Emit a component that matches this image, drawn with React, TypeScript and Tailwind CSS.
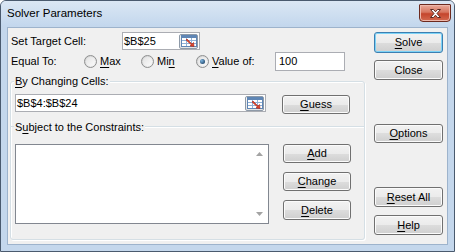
import React from "react";

const font = "font-['Liberation_Sans',Arial,sans-serif]";

function Btn({ children, className = "", focused = false }: { children: React.ReactNode; className?: string; focused?: boolean }) {
  return (
    <div
      className={`flex items-center justify-center rounded-[3px] border text-[11px] text-black ${
        focused
          ? "border-[#3c7fb1] bg-[linear-gradient(#f2f2f2,#ebebeb_50%,#dddddd_50%,#cfcfcf)] shadow-[inset_0_0_0_1px_#7cd3f7]"
          : "border-[#707070] bg-[linear-gradient(#f2f2f2,#ebebeb_50%,#dddddd_50%,#cfcfcf)] shadow-[inset_0_0_0_1px_#fbfbfb]"
      } ${className}`}
    >
      {children}
    </div>
  );
}

function K({ children }: { children: React.ReactNode }) {
  return <span className="underline decoration-1 underline-offset-[2px]">{children}</span>;
}

function RefIcon() {
  return (
    <svg width="16" height="12" viewBox="0 0 16 12">
      <rect x="0.5" y="0.5" width="15" height="11" fill="#ffffff" stroke="#5f86b5" />
      <rect x="1" y="1" width="14" height="2" fill="#5f86b5" />
      <line x1="1" y1="5.5" x2="15" y2="5.5" stroke="#8fb0d6" />
      <line x1="1" y1="8.5" x2="15" y2="8.5" stroke="#8fb0d6" />
      <line x1="5.5" y1="3" x2="5.5" y2="11" stroke="#8fb0d6" />
      <line x1="10.5" y1="3" x2="10.5" y2="11" stroke="#8fb0d6" />
      <path d="M6 4 L11 9 L12.5 7.5 L13 11.5 L9 11 L10.3 9.8 L5 5 Z" fill="#e0452b" stroke="#a8251a" strokeWidth="0.6" />
    </svg>
  );
}

function RefBtn() {
  return (
    <div className="flex h-[15px] w-[19px] items-center justify-center rounded-[2px] border border-[#8e9aa8] bg-[linear-gradient(#f6f6f6,#e4e4e4)]">
      <RefIcon />
    </div>
  );
}

function Radio({ checked = false }: { checked?: boolean }) {
  return (
    <div className="flex h-[13px] w-[13px] items-center justify-center rounded-full border border-[#8e8f8f] bg-[linear-gradient(135deg,#cfd0d1,#f6f6f6)]">
      <div className="flex h-[9px] w-[9px] items-center justify-center rounded-full bg-[linear-gradient(135deg,#e3e3e3,#fbfbfb)]">
        {checked && <div className="h-[5px] w-[5px] rounded-full bg-[radial-gradient(circle_at_35%_35%,#7db5e0,#0b2d4f)]" />}
      </div>
    </div>
  );
}

export default function App() {
  return (
    <div className={`${font} h-[252px] w-[455px] select-none text-[11px] text-black`}>
      <div className="flex h-[252px] w-[455px] flex-col rounded-t-[6px] border border-[#4a5a6e] bg-[#c4d7ec]">
        {/* Title bar */}
        <div className="flex h-[25px] items-start justify-between rounded-t-[5px] bg-[linear-gradient(#dbe7f4,#c3d7ed)] pl-[6px] pr-[3px]">
          <span className="mt-[5px] text-[11.5px] leading-[14px] text-black">Solver Parameters</span>
          <div className="mt-[3px] flex h-[18px] w-[32px] items-center justify-center rounded-b-[4px] rounded-t-[1px] border border-[#6d2a1f] bg-[linear-gradient(#e9a99a,#d7765f_45%,#c4452c_55%,#d46a50)] shadow-[inset_0_0_0_1px_#eeb8ab]">
            <svg width="13" height="11" viewBox="0 0 13 11">
              <path d="M1.5 1.5 L4.5 1.5 L6.5 3.8 L8.5 1.5 L11.5 1.5 L8 5.5 L11.5 9.5 L8.5 9.5 L6.5 7.2 L4.5 9.5 L1.5 9.5 L5 5.5 Z" fill="#ffffff" stroke="#5a2a22" strokeWidth="1" strokeLinejoin="round" />
            </svg>
          </div>
        </div>

        {/* Frame + client */}
        <div className="flex flex-1 flex-col px-[6px] pb-[5px] pt-[1px]">
          <div className="flex h-[218px] border border-[#9db3cc] bg-[#f0f0f0]">
            {/* Left column */}
            <div className="flex w-[357px] flex-col">
              {/* Row 1 */}
              <div className="mt-[4px] flex h-[18px] items-center">
                <span className="w-[114px] pl-[3px]">Set Target Cell:</span>
                <div className="flex h-[18px] w-[78px] items-center justify-between border border-[#abadb3] bg-white pl-[1px] pr-[1px]">
                  <span>$B$25</span>
                  <RefBtn />
                </div>
              </div>
              {/* Row 2 */}
              <div className="mt-[2px] flex h-[19px] items-center">
                <span className="w-[76px] pl-[3px]">Equal To:</span>
                <div className="flex w-[57px] items-center">
                  <Radio />
                  <span className="ml-[3px]">
                    <K>M</K>ax
                  </span>
                </div>
                <div className="flex w-[55px] items-center">
                  <Radio />
                  <span className="ml-[3px]">
                    Mi<K>n</K>
                  </span>
                </div>
                <div className="flex w-[79px] items-center">
                  <Radio checked />
                  <span className="ml-[3px]">
                    <K>V</K>alue of:
                  </span>
                </div>
                <div className="flex h-[19px] w-[70px] items-center border border-[#abadb3] bg-white pl-[3px]">100</div>
              </div>

              {/* Group */}
              <div className="relative ml-[2px] mt-[10px] h-[159px] w-[355px] rounded-[3px] border border-[#d5dfe5] shadow-[inset_1px_1px_0_#ffffff,1px_1px_0_#ffffff]">
                <span className="absolute -top-[8px] left-[3px] bg-[#f0f0f0] px-[1px] leading-[14px]">
                  <K>B</K>y Changing Cells:
                </span>
                <div className="mt-[12px] flex items-start pl-[4px]">
                  <div className="flex h-[18px] w-[251px] items-center justify-between border border-[#abadb3] bg-white pl-[1px] pr-[1px]">
                    <span>$B$4:$B$24</span>
                    <RefBtn />
                  </div>
                  <Btn className="ml-[16px] mt-[1px] h-[19px] w-[68px]">
                    <span>
                      <K>G</K>uess
                    </span>
                  </Btn>
                </div>
                <div className="mt-[6px] flex h-[14px] items-center">
                  <div className="h-[2px] w-[3px] border-t border-[#d5dfe5] border-b-white" />
                  <span className="px-[1px] leading-[14px]">
                    S<K>u</K>bject to the Constraints:
                  </span>
                  <div className="h-[2px] flex-1 border-b border-t border-b-white border-t-[#d5dfe5]" />
                </div>
                <div className="mt-[10px] flex items-start pl-[4px]">
                  <div className="flex h-[80px] w-[254px] border border-[#828790] bg-white">
                    <div className="flex-1" />
                    <div className="flex w-[17px] flex-col items-center justify-between py-[7px]">
                      <svg width="7" height="4" viewBox="0 0 7 4">
                        <path d="M0 4 L3.5 0 L7 4 Z" fill="#a3a3a3" />
                      </svg>
                      <svg width="7" height="4" viewBox="0 0 7 4">
                        <path d="M0 0 L3.5 4 L7 0 Z" fill="#a3a3a3" />
                      </svg>
                    </div>
                  </div>
                  <div className="ml-[14px] flex flex-col">
                    <Btn className="h-[19px] w-[68px]">
                      <span>
                        <K>A</K>dd
                      </span>
                    </Btn>
                    <Btn className="mt-[9px] h-[19px] w-[68px]">
                      <span>
                        <K>C</K>hange
                      </span>
                    </Btn>
                    <Btn className="mt-[9px] h-[20px] w-[68px]">
                      <span>
                        <K>D</K>elete
                      </span>
                    </Btn>
                  </div>
                </div>
              </div>
            </div>

            {/* Right column */}
            <div className="ml-[9px] flex w-[69px] flex-col">
              <Btn focused className="mt-[4px] h-[21px]">
                <span>
                  <K>S</K>olve
                </span>
              </Btn>
              <Btn className="mt-[7px] h-[20px]">Close</Btn>
              <Btn className="mt-[44px] h-[19px]">
                <span>
                  <K>O</K>ptions
                </span>
              </Btn>
              <Btn className="mt-[44px] h-[20px]">
                <span>
                  <K>R</K>eset All
                </span>
              </Btn>
              <Btn className="mt-[8px] h-[20px]">
                <span>
                  <K>H</K>elp
                </span>
              </Btn>
            </div>
          </div>
        </div>
      </div>
    </div>
  );
}
